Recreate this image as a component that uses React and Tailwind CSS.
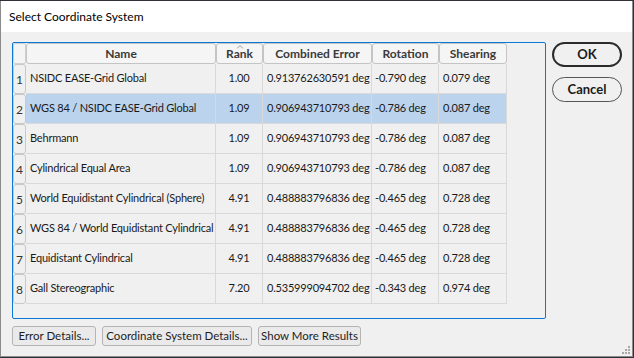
import React from "react";

const rows = [
  ["NSIDC EASE-Grid Global", "1.00", "0.913762630591 deg", "-0.790 deg", "0.079 deg"],
  ["WGS 84 / NSIDC EASE-Grid Global", "1.09", "0.906943710793 deg", "-0.786 deg", "0.087 deg"],
  ["Behrmann", "1.09", "0.906943710793 deg", "-0.786 deg", "0.087 deg"],
  ["Cylindrical Equal Area", "1.09", "0.906943710793 deg", "-0.786 deg", "0.087 deg"],
  ["World Equidistant Cylindrical (Sphere)", "4.91", "0.488883796836 deg", "-0.465 deg", "0.728 deg"],
  ["WGS 84 / World Equidistant Cylindrical", "4.91", "0.488883796836 deg", "-0.465 deg", "0.728 deg"],
  ["Equidistant Cylindrical", "4.91", "0.488883796836 deg", "-0.465 deg", "0.728 deg"],
  ["Gall Stereographic", "7.20", "0.535999094702 deg", "-0.343 deg", "0.974 deg"],
];

const font = { fontFamily: '"Segoe UI", Lato, "Liberation Sans", sans-serif' };

function HeaderCell({ width, children, sorted }) {
  return (
    <div
      className={`${width} relative flex h-full items-center justify-center rounded-[3px] border border-[#c4c4c4] bg-[#f5f5f5] text-[12px] font-bold text-[#3a3a3a]`}
    >
      {sorted && (
        <svg className="absolute left-1/2 top-[1px] -translate-x-1/2" width="7" height="4" viewBox="0 0 7 4">
          <path d="M0.5 3.5 L3.5 0.5 L6.5 3.5" fill="none" stroke="#9a9a9a" strokeWidth="1" />
        </svg>
      )}
      {children}
    </div>
  );
}

function SmallButton({ children, width }) {
  return (
    <button
      type="button"
      className={`${width} h-[20px] whitespace-nowrap rounded-[3px] border border-[#b4b4b4] bg-[#eaeaea] text-[11.5px] text-[#1e1e1e]`}
    >
      {children}
    </button>
  );
}

export default function App() {
  return (
    <div className="h-[358px] w-[634px] bg-[#2e3236] pt-px" style={font}>
      <div className="flex h-[356px] w-[633px] flex-col border-x border-b border-[#8c8c8c] bg-[#f0f0f0]">
        <div className="flex h-[31px] items-center bg-white pl-[8px] text-[12px] text-black">
          Select Coordinate System
        </div>

        <div className="relative flex flex-1 gap-[6px] pl-[11px] pt-[10px]">
          <div className="flex flex-col gap-[7px]">
            <div className="h-[277px] w-[534px] rounded-[2px] border border-[#0a78d7] bg-[#f0f0f0]">
              <div className="flex h-[21px]">
                <div className="h-full w-[13px] rounded-[2px] border border-[#d0d0d0] bg-[#f4f4f4]" />
                <HeaderCell width="w-[190px]">Name</HeaderCell>
                <HeaderCell width="w-[47px]" sorted>Rank</HeaderCell>
                <HeaderCell width="w-[109px]">Combined Error</HeaderCell>
                <HeaderCell width="w-[67px]">Rotation</HeaderCell>
                <HeaderCell width="w-[68px]">Shearing</HeaderCell>
              </div>
              {rows.map((r, i) => {
                const selected = i === 1;
                return (
                  <div key={i} className="flex h-[30px] text-[11px] tracking-[-0.2px] text-[#1a1a1a]">
                    <div className="flex h-full w-[13px] items-center justify-center rounded-[3px] border border-[#c8c8c8] bg-[#f0f0f0] pt-[2px] text-[12px] tracking-normal text-[#333]">
                      {i + 1}
                    </div>
                    <div className={`flex ${selected ? "bg-[#bcd3ee]" : ""}`}>
                      <div className="flex h-full w-[190px] items-center overflow-hidden whitespace-nowrap border-b border-r border-[#d9d9d9] pl-[4px]">
                        {r[0]}
                      </div>
                      <div className="flex h-full w-[47px] items-center justify-center border-b border-r border-[#d9d9d9]">
                        {r[1]}
                      </div>
                      <div className="flex h-full w-[109px] items-center whitespace-nowrap border-b border-r border-[#d9d9d9] pl-[4px]">
                        {r[2]}
                      </div>
                      <div className="flex h-full w-[67px] items-center whitespace-nowrap border-b border-r border-[#d9d9d9] pl-[3px]">
                        {r[3]}
                      </div>
                      <div className="flex h-full w-[68px] items-center whitespace-nowrap border-b border-r border-[#d9d9d9] pl-[4px]">
                        {r[4]}
                      </div>
                    </div>
                  </div>
                );
              })}
            </div>
            <div className="flex gap-[6px]">
              <SmallButton width="w-[84px]">Error Details...</SmallButton>
              <SmallButton width="w-[150px]">Coordinate System Details...</SmallButton>
              <SmallButton width="w-[103px]">Show More Results</SmallButton>
            </div>
          </div>

          <div className="flex flex-col gap-[10px]">
            <button
              type="button"
              className="h-[25px] w-[70px] rounded-full border-2 border-[#2b2b2b] bg-[#f0f0f0] text-[13px] font-bold text-[#1a1a1a]"
            >
              OK
            </button>
            <button
              type="button"
              className="h-[25px] w-[70px] rounded-full border border-[#555] bg-[#f0f0f0] text-[13px] font-bold text-[#1a1a1a]"
            >
              Cancel
            </button>
          </div>

          <svg className="absolute bottom-[1px] right-[1px]" width="10" height="10" viewBox="0 0 10 10">
            <rect x="7" y="1" width="2" height="2" fill="#a8a8a8" />
            <rect x="4" y="4" width="2" height="2" fill="#a8a8a8" />
            <rect x="7" y="4" width="2" height="2" fill="#a8a8a8" />
            <rect x="1" y="7" width="2" height="2" fill="#a8a8a8" />
            <rect x="4" y="7" width="2" height="2" fill="#a8a8a8" />
            <rect x="7" y="7" width="2" height="2" fill="#a8a8a8" />
          </svg>
        </div>
      </div>
    </div>
  );
}
